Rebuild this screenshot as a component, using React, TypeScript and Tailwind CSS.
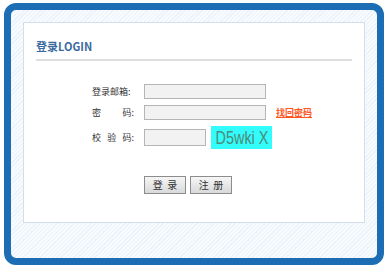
import React from "react";

const cjk = "font-['Noto_Sans_CJK_SC','Liberation_Sans',sans-serif]";

function FormRow({ label, children, tall }: { label: React.ReactNode; children: React.ReactNode; tall?: boolean }) {
  return (
    <div className={`flex items-center pl-[68px] ${tall ? "h-[23px]" : "h-[15px]"}`}>
      <div className={`w-[42px] mr-[10px] flex justify-between whitespace-nowrap text-[9px] leading-none text-[#333] ${cjk}`}>{label}</div>
      {children}
    </div>
  );
}

export default function App() {
  return (
    <div className="w-[390px] h-[270px] bg-white pl-[4px] pt-[3px]">
      <div className="w-[380px] h-[262px] rounded-[12px] border-[7px] border-[#1c6db4] bg-[repeating-linear-gradient(135deg,#ebf2f9_0px,#ebf2f9_1px,#f8fbfe_1px,#f8fbfe_3px)] pl-[12px] pt-[12px]">
        <div className="w-[342px] h-[201px] border border-[#d3deea] bg-white">
          <div className="mx-[12px] pt-[16px] pb-[6px] border-b-2 border-[#dedede]">
            <h1 className={`text-[11px] leading-[14px] font-bold text-[#3a6aa0] ${cjk}`}>登录LOGIN</h1>
          </div>

          <div className="mt-[23px] flex flex-col gap-[6px]">
            <FormRow label={<span>登录邮箱:</span>}>
              <input readOnly className="w-[122px] h-[15px] border border-[#b5b5b5] bg-[#f2f2f2] outline-none" />
            </FormRow>
            <FormRow label={<><span>密</span><span>码:</span></>}>
              <input readOnly className="w-[122px] h-[15px] border border-[#b5b5b5] bg-[#f2f2f2] outline-none" />
              <a className={`ml-[10px] text-[9px] leading-none font-bold underline text-[#ff5522] ${cjk}`}>找回密码</a>
            </FormRow>
            <FormRow tall label={<><span>校</span><span>验</span><span>码:</span></>}>
              <input readOnly className="w-[62px] h-[17px] border border-[#b5b5b5] bg-[#f2f2f2] outline-none" />
              <div className="ml-[5px] w-[61px] h-[23px] bg-[#33fcfc] flex items-center justify-center overflow-hidden">
                <span className="inline-block scale-x-[0.8] font-['Liberation_Sans',sans-serif] text-[18px] leading-none text-[#4b8c78] whitespace-pre">
                  D5wki X
                </span>
              </div>
            </FormRow>
          </div>

          <div className="mt-[27px] pl-[120px] flex gap-[4px]">
            {["登  录", "注  册"].map((t) => (
              <button
                key={t}
                className={`w-[42px] h-[18px] border border-[#8c8c8c] bg-gradient-to-b from-[#f6f6f6] to-[#d9d9d9] text-[10px] leading-none text-[#333] whitespace-pre ${cjk}`}
              >
                {t}
              </button>
            ))}
          </div>
        </div>
      </div>
    </div>
  );
}
